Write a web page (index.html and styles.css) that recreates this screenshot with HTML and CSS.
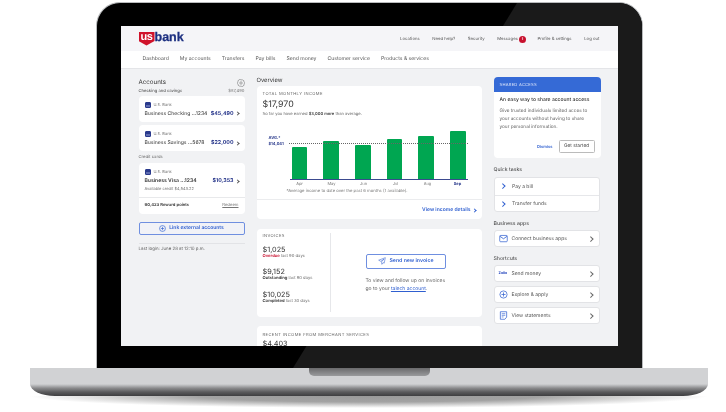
FILE: index.html
```html
<!DOCTYPE html>
<html lang="en">
<head>
<meta charset="utf-8">
<title>U.S. Bank dashboard</title>
<link rel="stylesheet" href="styles.css">
</head>
<body>
<div class="stage">
  <div class="lid">
    <div class="screen">
      <header class="topbar">
        <div class="logo">
          <span class="shield">us</span><span class="bank">bank</span>
        </div>
        <nav class="toplinks">
          <span class="tl-loc">Locations</span>
          <span class="tl-help">Need help?</span>
          <span class="tl-sec">Security</span>
          <span class="tl-msg">Messages<b class="badge">1</b></span>
          <span class="tl-prof">Profile &amp; settings</span>
          <span>Log out</span>
        </nav>
      </header>
      <nav class="mainnav">
        <span>Dashboard</span><span>My accounts</span><span>Transfers</span><span>Pay bills</span><span>Send money</span><span>Customer service</span><span>Products &amp; services</span>
      </nav>
      <main class="columns">
        <section class="col-left">
          <div class="acc-head">
            <h2>Accounts</h2>
            <svg class="gear" viewBox="0 0 12 12"><path d="M6 .8l1.100.6 1.300-.2.800 1 1.200.5.100 1.300.9 1-.5 1.200.5 1.200-.9 1-.1 1.300-1.200.5-.8 1-1.300-.2L6 11.200l-1.100-.6-1.300.2-.8-1-1.200-.5-.1-1.300-.9-1 .5-1.200-.5-1.200.9-1 .1-1.300 1.200-.5.8-1 1.300.2z" fill="none" stroke="#666" stroke-width=".8"/><circle cx="6" cy="6" r="1.800" fill="none" stroke="#666" stroke-width=".8"/></svg>
          </div>
          <div class="sub-row"><span>Checking and savings</span><span class="muted">$87,490</span></div>
          <article class="card acc">
            <div class="acc-bank"><i class="bank-ico"></i>U.S. Bank</div>
            <div class="acc-line"><span>Business Checking ...1234</span><b>$45,490</b><em class="chev"></em></div>
          </article>
          <article class="card acc">
            <div class="acc-bank"><i class="bank-ico"></i>U.S. Bank</div>
            <div class="acc-line"><span>Business Savings ...5678</span><b>$22,000</b><em class="chev"></em></div>
          </article>
          <div class="sub-row credit"><span>Credit cards</span></div>
          <article class="card credit-card">
            <div class="credit-top">
              <div class="acc-bank"><i class="bank-ico"></i>U.S. Bank</div>
              <div class="acc-line"><span class="strong">Business Visa ...1234</span><b>$10,353</b><em class="chev"></em></div>
              <div class="avail">Available credit $4,543.22</div>
            </div>
            <div class="reward"><span>90,423 Reward points</span><u>Redeem</u></div>
          </article>
          <button class="btn-link"><svg viewBox="0 0 10 10"><circle cx="5" cy="5" r="4.200" fill="none" stroke="#2f5fd0" stroke-width=".9"/><path d="M5 2.600v4.800M2.600 5h4.800" stroke="#2f5fd0" stroke-width=".9"/></svg><span class="btn-text">Link external accounts</span></button>
          <div class="last-login">Last login: June 28 at 12:10 p.m.</div>
        </section>

        <section class="col-mid">
          <h2 class="overview">Overview</h2>
          <article class="card income">
            <div class="eyebrow">TOTAL MONTHLY INCOME</div>
            <div class="big">$17,970</div>
            <p class="so-far">So far you have earned <b>$3,000 more</b> than average.</p>
            <div class="chart">
              <div class="avg">AVG.*<br>$14,041</div>
              <div class="avg-line"></div>
              <div class="bars">
                <div class="bar" style="height:32px"></div>
                <div class="bar" style="height:38px"></div>
                <div class="bar" style="height:34px"></div>
                <div class="bar" style="height:40px"></div>
                <div class="bar" style="height:43px"></div>
                <div class="bar" style="height:48px"></div>
              </div>
              <div class="months"><span>Apr</span><span>May</span><span>Jun</span><span>Jul</span><span>Aug</span><span class="now">Sep</span></div>
            </div>
            <p class="foot">*Average income to date over the past 6 months (1 available).</p>
            <div class="details">View income details<em class="chev blue"></em></div>
          </article>

          <article class="card invoices">
            <div class="inv-left">
              <div class="eyebrow">INVOICES</div>
              <div class="inv-num first">$1,025</div>
              <div class="inv-sub"><b class="red">Overdue</b> last 90 days</div>
              <div class="inv-num">$9,152</div>
              <div class="inv-sub"><b>Outstanding</b> last 90 days</div>
              <div class="inv-num">$10,025</div>
              <div class="inv-sub"><b>Completed</b> last 30 days</div>
            </div>
            <div class="inv-right">
              <button class="btn-send"><svg viewBox="0 0 12 12"><path d="M11 1L1 4.800l3.200 1.700L9 3 5.300 7.300 5.800 11l1.800-2.600 1.700.9z" fill="none" stroke="#2f5fd0" stroke-width=".8" stroke-linejoin="round"/></svg><span class="btn-text">Send new invoice</span></button>
              <p>To view and follow up on invoices<br>go to your <a>talech account</a>.</p>
            </div>
          </article>

          <article class="card merchant">
            <div class="eyebrow">RECENT INCOME FROM MERCHANT SERVICES</div>
            <div class="inv-num merchant-num">$4,403</div>
          </article>
        </section>

        <aside class="col-right">
          <article class="shared">
            <div class="shared-head">SHARED ACCESS</div>
            <div class="shared-body">
              <h3>An easy way to share account access</h3>
              <p>Give trusted individuals limited acces to your accounts without having to share your personal information.</p>
              <div class="shared-actions"><span class="dismiss">Dismiss</span><button>Get started</button></div>
            </div>
          </article>
          <h2 class="side-title quick">Quick tasks</h2>
          <div class="tile tasks">
            <div class="row"><em class="chev blue lead"></em><span>Pay a bill</span></div>
            <div class="row"><em class="chev blue lead"></em><span>Transfer funds</span></div>
          </div>
          <h2 class="side-title">Business apps</h2>
          <div class="tile row-tile">
            <svg class="ico" viewBox="0 0 10 10"><rect x=".8" y="1.600" width="8.400" height="7" rx="1" fill="none" stroke="#2f5fd0" stroke-width=".8"/><path d="M1 2.500l4 2.800 4-2.800" fill="none" stroke="#2f5fd0" stroke-width=".9"/></svg>
            <span>Connect business apps</span><em class="chev"></em>
          </div>
          <h2 class="side-title shortcuts">Shortcuts</h2>
          <div class="tile row-tile">
            <b class="zelle">Zelle</b><span>Send money</span><em class="chev"></em>
          </div>
          <div class="tile row-tile gap">
            <svg class="ico" viewBox="0 0 10 10"><circle cx="5" cy="5" r="4" fill="none" stroke="#2f5fd0" stroke-width=".8"/><path d="M5 2.700v4.600M2.700 5h4.600" stroke="#2f5fd0" stroke-width=".8"/></svg>
            <span>Explore &amp; apply</span><em class="chev"></em>
          </div>
          <div class="tile row-tile gap">
            <svg class="ico" viewBox="0 0 10 10"><path d="M1.500.8h7v6L6.500 9.200h-5z" fill="none" stroke="#2f5fd0" stroke-width=".8"/><path d="M3 3h4M3 4.800h4M3 6.600h2" stroke="#2f5fd0" stroke-width=".7"/></svg>
            <span>View statements</span><em class="chev"></em>
          </div>
        </aside>
      </main>
    </div>
  </div>
  <div class="base"><div class="notch"></div></div>
  <div class="shadow"></div>
</div>
</body>
</html>
```

FILE: styles.css
```css
* { box-sizing: border-box; }
html, body { margin: 0; padding: 0; background: #fff; }
body { font-family: Inter, "Liberation Sans", sans-serif; color: #333; overflow: hidden; text-rendering: geometricPrecision; }
h2, h3, p { margin: 0; font-weight: 400; }
em { font-style: normal; }
button { font-family: inherit; padding: 0; background: #fff; cursor: pointer; text-rendering: geometricPrecision; }

.stage { width: 726px; height: 412px; padding-top: 2px; overflow: hidden; }

/* laptop lid */
.lid {
  position: relative;
  width: 547px; height: 366px; margin-left: 96px;
  padding: 22.500px 0 0 23.500px;
  background: #000;
  border: 1.500px solid #b9bbbd; border-bottom: 0;
  border-radius: 24px 24px 0 0;
  overflow: hidden;
}
.lid::before {
  content: ""; position: absolute; inset: 0;
  background: #1a1a1a;
  clip-path: polygon(420px 0, 100% 0, 100% 100%, 196px 100%);
}
.screen {
  position: relative; height: 320px; width: 497px;
  background: #f1f2f4; overflow: hidden;
  filter: blur(.3px);
}

/* header */
.topbar {
  height: 25px; background: #f5f5f8; padding: 6px 18px 0;
  display: flex; justify-content: space-between;
}
.logo { display: flex; align-items: flex-start; height: 14px; }
.shield {
  width: 16px; height: 14px; background: #d0132b; color: #fff;
  font: 700 11px/10px "Liberation Sans", sans-serif; text-align: center;
  clip-path: polygon(0 0, 100% 0, 100% 68%, 50% 100%, 0 68%);
  letter-spacing: -.5px;
}
.bank { font: 700 12.500px/10px "Liberation Sans", sans-serif; color: #1c2f80; -webkit-text-stroke: .25px #1c2f80; }
.toplinks { display: flex; gap: 12.500px; padding-top: 5px; font-size: 4.300px; line-height: 6px; color: #555; }
.tl-msg { position: relative; padding-right: 8px; margin-right: -1px; }
.badge {
  position: absolute; right: 0; top: -1px; width: 7px; height: 7px; border-radius: 50%;
  background: #c8102e; color: #fff; font-size: 3.500px; line-height: 7px; text-align: center;
}
.mainnav {
  height: 18px; background: #fff; border-bottom: 1px solid #e4e5e8; margin-top: 0;
  display: flex; gap: 11px; padding: 0 0 0 22px; align-items: center;
  font-size: 5.100px; color: #555;
}

/* columns */
.columns {
  display: grid; grid-template-columns: 106px 225px 107px; column-gap: 12px;
  padding: 0 0 0 18px; margin-top: 0;
}
.card { background: #fff; border-radius: 4px; }

/* left */
.col-left { padding-top: 9px; }
.acc-head { display: flex; justify-content: space-between; align-items: center; height: 10px; }
.acc-head h2 { font-size: 6.200px; color: #333; }
.gear { width: 8px; height: 8px; }
.sub-row { display: flex; justify-content: space-between; font-size: 4.200px; line-height: 6px; margin-top: 1px; color: #444; }
.muted { color: #777; }
.credit { margin-top: 4px; color: #666; }
.acc { height: 26px; margin-top: 3.500px; padding: 6px 6px 0; }
.sub-row + .acc { margin-top: 1px; }
.acc-bank { display: flex; align-items: center; gap: 3px; font-size: 4px; line-height: 6px; color: #777; }
.bank-ico { width: 6px; height: 6px; background: #2a3a8c; border-radius: 1px; border: 1px solid #2a3a8c; box-shadow: inset 0 -2px 0 #5f6cb0; }
.acc-line { display: flex; align-items: center; font-size: 5.100px; line-height: 8px; margin-top: 2px; color: #333; }
.acc-line span { flex: 1; white-space: nowrap; }
.acc-line b { font-size: 5.300px; color: #26358a; font-weight: 700; }
.chev {
  display: inline-block; width: 3px; height: 3px; margin-left: 2px; flex: none;
  border-top: .6px solid #555; border-right: .6px solid #555; transform: rotate(45deg);
}
.chev.blue { border-color: #2f5fd0; }
.credit-card { height: 50.500px; margin-top: 2px; }
.credit-card { display: flex; flex-direction: column; }
.credit-top { height: 35px; padding: 6px 6px 0; border-bottom: 1px solid #e8e9eb; }
.strong { font-weight: 600; }
.avail { font-size: 4px; line-height: 6px; color: #777; margin-top: 1px; }
.reward { display: flex; justify-content: space-between; align-items: center; flex: 1; padding: 0 6px; font-size: 4.200px; font-weight: 600; color: #333; }
.reward u { font-weight: 400; color: #777; }
.btn-link {
  display: flex; align-items: center; justify-content: center; gap: 3px;
  width: 106px; height: 13px; margin-top: 8px; background: #f1f2f7;
  border: .8px solid #6f8fe0; border-radius: 2px; color: #2f5fd0;
  font-size: 5px; font-weight: 600; line-height: 1;
}
.btn-link svg { width: 7px; height: 7px; }
.btn-text { padding-top: 1px; }
.last-login { margin-top: 8px; padding-top: 3px; border-top: 1px solid #e2e3e6; font-size: 4.400px; line-height: 6px; color: #666; }

/* middle */
.col-mid { padding-top: 8px; }
.overview { font-size: 5.800px; line-height: 8px; color: #333; height: 9px; }
.income { height: 133px; padding: 5px 6px 0; position: relative; }
.eyebrow { font-size: 4.100px; line-height: 6px; letter-spacing: .4px; color: #666; }
.big { font-size: 8.800px; line-height: 11px; margin-top: 2px; color: #333; }
.so-far { font-size: 4.100px; line-height: 6px; margin-top: 1px; color: #666; }
.so-far b { font-weight: 600; color: #444; }
.chart { position: relative; height: 66px; margin-top: 14px; margin-left: 27px; width: 178px; }
.avg { position: absolute; left: -21px; top: 4px; font-size: 4px; line-height: 6.500px; font-weight: 700; color: #2a3a8c; width: 20px; }
.avg-line { position: absolute; left: -1px; right: 0; top: 12px; border-top: .7px dotted #666; z-index: 1; }
.bars {
  height: 49px; display: flex; align-items: flex-end; gap: 16px; padding: 0 2px;
  border-bottom: 1.200px solid #3b4a8f;
}
.bar { width: 16px; background: #00a651; border-radius: 1px 1px 0 0; }
.months { display: flex; gap: 16px; padding: 1px 2px 0; font-size: 4px; line-height: 6px; color: #777; text-align: center; }
.months span { width: 16px; }
.months .now { color: #2a3a8c; font-weight: 700; margin-left: -2px; }
.foot { position: absolute; left: 30px; top: 103.500px; font-size: 4.200px; line-height: 6px; color: #777; white-space: nowrap; }
.details {
  position: absolute; left: 0; right: 0; bottom: 0; height: 20px; padding: 2px 6px 0 0;
  border-top: 1px solid #ebecee; display: flex; align-items: center; justify-content: flex-end;
  font-size: 5px; font-weight: 600; color: #2f5fd0;
}
.invoices { height: 88px; margin-top: 10px; display: flex; padding: 4px 0 5px 6px; }
.inv-left { width: 68px; border-right: 1px solid #e6e7ea; padding-top: 0; }
.inv-num { font-size: 7.300px; line-height: 9px; margin-top: 7.500px; color: #333; }
.inv-num.first { margin-top: 6px; }
.inv-sub { font-size: 4.200px; line-height: 6px; margin-top: 0; color: #666; }
.inv-sub b { font-weight: 600; color: #333; }
.inv-sub .red { color: #c8102e; }
.inv-right { padding: 21px 0 0 35px; }
.btn-send {
  display: flex; align-items: center; justify-content: center; gap: 4px;
  width: 80px; height: 15px; border: .8px solid #6f8fe0; border-radius: 2px;
  color: #2f5fd0; font-size: 5.200px; font-weight: 600; line-height: 1;
}
.btn-send svg { width: 8px; height: 8px; }
.inv-right p { font-size: 5px; line-height: 8px; color: #666; margin-top: 8px; }
.inv-right a { color: #2f5fd0; text-decoration: underline; }
.merchant { margin-top: 9px; height: 40px; padding: 6px 6px; }
.merchant-num { margin-top: 1px; }

/* right */
.col-right { padding-top: 8px; }
.shared { height: 81px; }
.shared-head {
  height: 15px; background: #356ad6; color: #dfe7fa; border-radius: 4px 4px 0 0;
  padding: 0 6px; font-size: 4.100px; line-height: 15px; letter-spacing: .25px;
}
.shared-body { background: #fff; height: 66px; padding: 4px 6px 0; border-radius: 0 0 4px 4px; }
.shared-body h3 { font-size: 5px; font-weight: 500; line-height: 8px; color: #333; white-space: nowrap; }
.shared-body p { font-size: 4.700px; line-height: 8px; color: #666; margin-top: 3px; }
.shared-actions { display: flex; justify-content: flex-end; align-items: center; gap: 6px; margin-top: 9px; }
.dismiss { font-size: 4.100px; font-weight: 600; color: #2f5fd0; }
.shared-actions button { width: 36px; height: 13px; border: .7px solid #bbb; border-radius: 1.500px; font-size: 4.800px; color: #444; }
.side-title { font-size: 5.200px; line-height: 8px; color: #333; margin-top: 8px; }
.quick { margin-top: 8.500px; }
.shortcuts { margin-top: 7.500px; }
.tile {
  width: 106px; background: #fff; border: .7px solid #e2e3e6; border-radius: 3px; margin-top: 2px;
  font-size: 5px; color: #555;
}
.tile.gap { margin-top: 3.500px; }
.tasks { height: 35px; margin-top: 2.500px; }
.row { height: 17px; display: flex; align-items: center; padding-left: 6px; gap: 8px; }
.row span { padding-top: 1px; }
.row + .row { border-top: .7px solid #e6e7ea; }
.lead { margin-left: 0; width: 3.500px; height: 3.500px; }
.row-tile { height: 17.500px; display: flex; align-items: center; padding: 0 6px 0 4px; }
.row-tile span { flex: 1; margin-left: 4px; padding-top: 1px; white-space: nowrap; }
.row-tile .chev { width: 3.500px; height: 3.500px; border-color: #666; }
.ico { width: 9px; height: 9px; flex: none; }
.zelle { font-size: 3.500px; color: #2f4fc0; width: 9px; font-weight: 800; }

/* base */
.base {
  position: relative; width: 678px; height: 28px; margin-left: 30px;
  border-radius: 0 0 25px 25px / 0 0 12px 12px;
  background: linear-gradient(#d1d2d4 0, #d1d2d4 57%, #c4c5c7 60%, #8a8a8c 72%, #5a5a5c 86%, #3e3e40 100%);
}
.notch {
  width: 121px; height: 8px; margin-left: 279px;
  background: linear-gradient(#6a6a6c, #999a9c); border-radius: 0 0 5px 5px;
}
.shadow {
  width: 678px; height: 12px; margin-left: 30px;
  background: radial-gradient(ellipse 50% 100% at 50% 0, #9a9a9a 0, #a3a3a3 50%, #e4e4e4 85%, #fff 100%);
}
```
